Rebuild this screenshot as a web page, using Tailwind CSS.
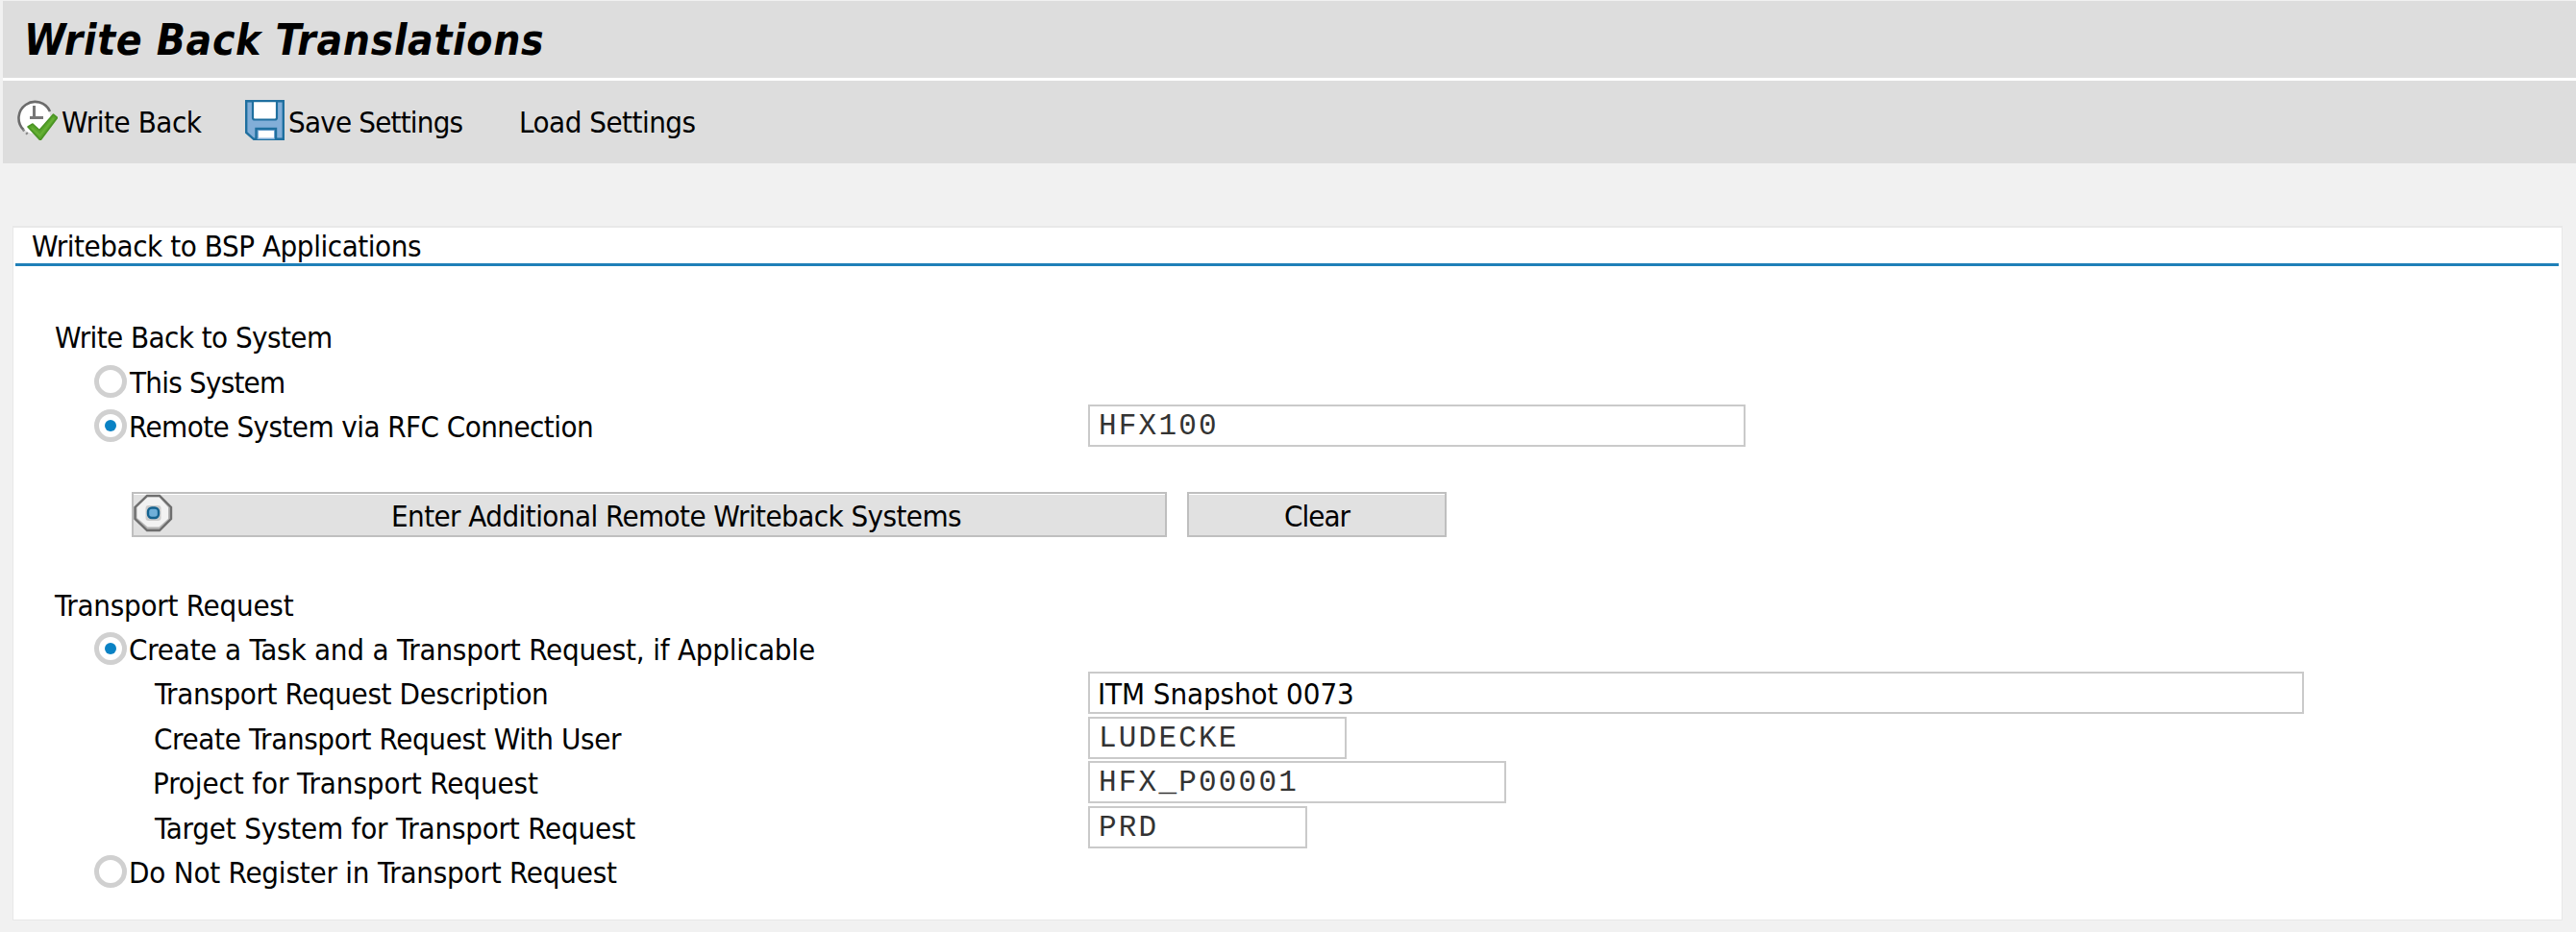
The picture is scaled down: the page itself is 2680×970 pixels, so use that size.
<!DOCTYPE html>
<html lang="en">
<head>
    <meta charset="UTF-8">
    <meta name="viewport" content="width=device-width, initial-scale=1.0">
    <title>Write Back Translations</title>
    <script src="https://cdn.jsdelivr.net/npm/@tailwindcss/browser@4"></script>
</head>
<body class="h-screen overflow-hidden bg-[#f1f1f1] pl-[3px] pt-[1px] font-['DejaVu_Sans_Condensed','DejaVu_Sans',sans-serif] text-[31px] leading-[36px] text-black whitespace-nowrap">
    <!-- Title bar -->
    <header class="h-[83px] border-b-[3px] border-white bg-[#dddddd] pl-[22px]">
        <h1 class="text-[44px] leading-[82px] font-bold italic tracking-[0.66px]">Write Back Translations</h1>
    </header>

    <!-- Toolbar -->
    <nav class="flex h-[86px] items-center bg-[#dddddd] pl-[15px]">
        <button class="flex w-[237px] items-center">
            <svg class="mb-[4px] h-[42px] w-[42px] shrink-0" viewBox="0 0 42 42" fill="none">
                <circle cx="18" cy="18.500" r="16.500" fill="#fff"></circle>
                <path d="M6.500 31A17 17 0 1 1 34 12" stroke="#6b6b6b" stroke-width="2.600"></path>
                <path d="M6 31l5 5" stroke="#888" stroke-width="2.600" stroke-dasharray="2 2.500"></path>
                <path d="M17.500 6v12.500M13 18.500h14" stroke="#777" stroke-width="3"></path>
                <path d="M11 28l5-3 7 6.500L37.500 15l4 3.500L24 42z" fill="#58a52b" stroke="#4a9324" stroke-width="1.600" stroke-linejoin="round"></path>
                <path d="M15 29l8.500 8L38 19" stroke="#66b035" stroke-width="2"></path>
            </svg>
            <span class="ml-[4px] tracking-[-0.45px]">Write Back</span>
        </button>
        <button class="flex w-[285px] items-center">
            <svg class="mb-[4px] h-[42px] w-[41px] shrink-0" viewBox="0 0 41 42" fill="none">
                <path d="M1.200 1.200h38.600v39.600H9L1.200 34z" fill="#82aed8" stroke="#1f6f9f" stroke-width="2.400"></path>
                <path d="M8 1.200h25v17.300q0 2-2 2H10q-2 0-2-2z" fill="#fff" stroke="#1f6f9f" stroke-width="2.200"></path>
                <path d="M11.500 41V30h20.500v11" fill="#82aed8" stroke="#1f6f9f" stroke-width="2.400"></path>
                <path d="M14 32h16v7.500H14z" fill="#fff"></path>
            </svg>
            <span class="ml-[4px] tracking-[-0.8px]">Save Settings</span>
        </button>
        <button class="tracking-[-0.5px]">Load Settings</button>
    </nav>

    <!-- Selection screen -->
    <main class="mt-[65px] ml-[10px] h-[723px] w-[2653px] border border-t-2 border-[#e8e8e8] bg-white">
        <h2 class="ml-[2px] mr-[3px] h-[40px] border-b-[3px] border-[#1f80b8] pl-[17px] leading-[38px] tracking-[-0.44px]">Writeback to BSP Applications</h2>

        <section class="mt-[51px] grid auto-rows-[46.42px] pl-[43px]">
            <div class="flex items-center tracking-[-0.56px]">Write Back to System</div>
            <div class="flex items-center pl-[41px]">
                <span class="mb-[2px] h-[34px] w-[34px] shrink-0 rounded-full border-[5px] border-[#d0d0d0] bg-white"></span>
                <span class="ml-[3px] tracking-[-0.77px]">This System</span>
            </div>
            <div class="flex items-center">
                <label class="flex w-[1075px] shrink-0 items-center pl-[41px]">
                    <span class="mb-[2px] flex h-[34px] w-[34px] shrink-0 items-center justify-center rounded-full border-[5px] border-[#d0d0d0] bg-white">
                        <span class="h-[12px] w-[12px] rounded-full bg-[#0a82c4]"></span>
                    </span>
                    <span class="ml-[2px] tracking-[-0.56px]">Remote System via RFC Connection</span>
                </label>
                <div class="mb-[2px] h-[44px] w-[684px] border-2 border-[#cacaca] bg-white pl-[9px] pt-px font-['Liberation_Mono',monospace] leading-[40px] tracking-[2.2px] text-[#333]">HFX100</div>
            </div>
            <div></div>
            <div class="flex items-center gap-[21px] pl-[80px]">
                <button class="mb-[2px] flex h-[47px] w-[1077px] shrink-0 items-center border-2 border-[#bfbfbf] bg-[#e1e1e1] shadow-[inset_0_1px_0_#fff]">
                    <svg class="mb-[4px] h-[40px] w-[41px] shrink-0" viewBox="0 0 41 40" fill="none">
                        <path d="M14 2h13l12 12v12L27 38H14L1.500 26V14z" fill="#b4b4b4" stroke="#6e6e6e" stroke-width="2.400"></path>
                        <path d="M14.500 3.500h12L36 14v12l-9.500 8.500h-12L3.500 25V14z" fill="#f2f2f2"></path>
                        <rect x="12.500" y="12" width="16" height="16" rx="3" fill="#cccccc"></rect>
                        <rect x="15" y="14.500" width="11" height="10.500" rx="4" fill="#6fafd9" stroke="#14628f" stroke-width="2.400"></rect>
                    </svg>
                    <span class="grow pt-[3px] pl-[15px] text-center tracking-[-0.56px]">Enter Additional Remote Writeback Systems</span>
                </button>
                <button class="mb-[2px] h-[47px] w-[270px] shrink-0 border-2 border-[#bfbfbf] bg-[#e1e1e1] pt-[3px] tracking-[-1px] shadow-[inset_0_1px_0_#fff]">Clear</button>
            </div>
            <div></div>
            <div class="flex items-center tracking-[-0.24px]">Transport Request</div>
            <div class="flex items-center pl-[41px]">
                <span class="mb-[2px] flex h-[34px] w-[34px] shrink-0 items-center justify-center rounded-full border-[5px] border-[#d0d0d0] bg-white">
                    <span class="h-[12px] w-[12px] rounded-full bg-[#0a82c4]"></span>
                </span>
                <span class="ml-[2px] tracking-[-0.21px]">Create a Task and a Transport Request, if Applicable</span>
            </div>
            <div class="flex items-center">
                <label class="w-[1075px] shrink-0 pl-[104px] tracking-[-0.37px]">Transport Request Description</label>
                <div class="mb-[2px] h-[44px] w-[1265px] border-2 border-[#cacaca] bg-white pl-[8px] pt-px leading-[40px] tracking-[-0.1px]">ITM Snapshot 0073</div>
            </div>
            <div class="flex items-center">
                <label class="w-[1075px] shrink-0 pl-[103px] tracking-[-0.36px]">Create Transport Request With User</label>
                <div class="mb-[2px] h-[44px] w-[269px] border-2 border-[#cacaca] bg-white pl-[9px] pt-px font-['Liberation_Mono',monospace] leading-[40px] tracking-[2.2px] text-[#333]">LUDECKE</div>
            </div>
            <div class="flex items-center">
                <label class="w-[1075px] shrink-0 pl-[102px] tracking-[-0.1px]">Project for Transport Request</label>
                <div class="mb-[2px] h-[44px] w-[435px] border-2 border-[#cacaca] bg-white pl-[9px] pt-px font-['Liberation_Mono',monospace] leading-[40px] tracking-[2.2px] text-[#333]">HFX_P00001</div>
            </div>
            <div class="flex items-center">
                <label class="w-[1075px] shrink-0 pl-[104px] tracking-[-0.2px]">Target System for Transport Request</label>
                <div class="mb-[2px] h-[44px] w-[228px] border-2 border-[#cacaca] bg-white pl-[9px] pt-px font-['Liberation_Mono',monospace] leading-[40px] tracking-[2.2px] text-[#333]">PRD</div>
            </div>
            <div class="flex items-center pl-[41px]">
                <span class="mb-[2px] h-[34px] w-[34px] shrink-0 rounded-full border-[5px] border-[#d0d0d0] bg-white"></span>
                <span class="ml-[2px] tracking-[-0.21px]">Do Not Register in Transport Request</span>
            </div>
        </section>
    </main>
</body>
</html>
